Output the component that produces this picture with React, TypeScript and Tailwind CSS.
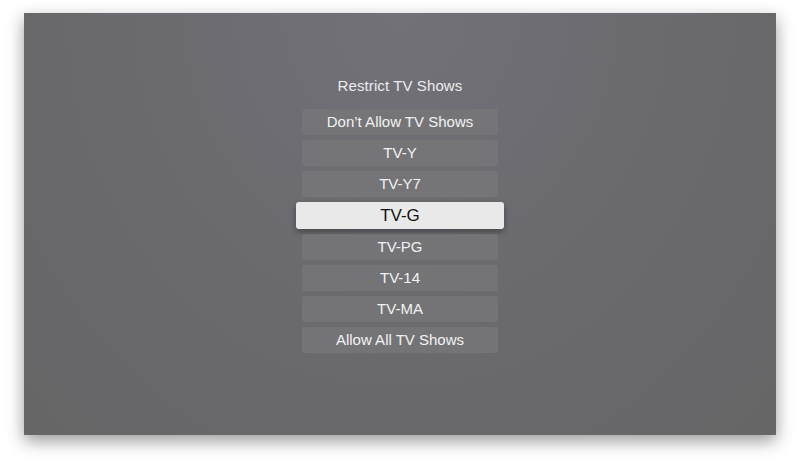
import React from 'react';

const options = [
  "Don\u2019t Allow TV Shows",
  'TV-Y',
  'TV-Y7',
  'TV-G',
  'TV-PG',
  'TV-14',
  'TV-MA',
  'Allow All TV Shows',
];

const selected = 'TV-G';

export default function App() {
  return (
    <div className="w-[800px] h-[470px] bg-white pt-[13px] pl-[24px]" style={{ fontFamily: '"Liberation Sans", Arial, sans-serif' }}>
      <div className="w-[752px] h-[422px] bg-[radial-gradient(ellipse_at_50%_0%,#727178_0%,#6a696d_55%,#666667_100%)] shadow-[0_6px_16px_rgba(0,0,0,0.4)] flex flex-col items-center pt-[63px]">
        <h1 className="text-[15px] leading-[20px] text-[#ececec] tracking-[0.1px]">Restrict TV Shows</h1>
        <div className="mt-[13px] flex flex-col items-center gap-[5px]">
          {options.map((o) =>
            o === selected ? (
              <div
                key={o}
                className="w-[208px] h-[27px] rounded-[3px] bg-[#e9e9e9] shadow-[0_3px_6px_rgba(0,0,0,0.35)] flex items-center justify-center text-[17px] text-[#111]"
              >
                {o}
              </div>
            ) : (
              <div
                key={o}
                className="w-[196px] h-[26px] rounded-[3px] bg-[#777779]/80 flex items-center justify-center text-[15px] text-[#f2f2f2]"
              >
                {o}
              </div>
            )
          )}
        </div>
      </div>
    </div>
  );
}
